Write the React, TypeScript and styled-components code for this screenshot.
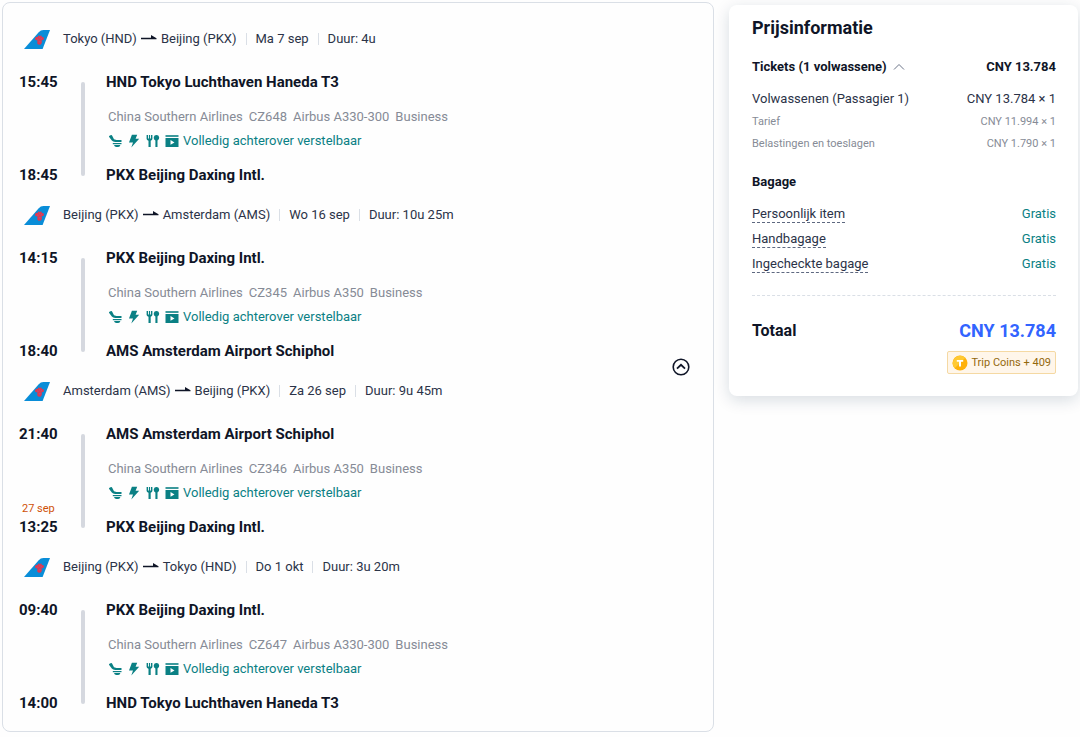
import React, { useState } from "react";
import styled, { createGlobalStyle } from "styled-components";

const ink = "#0f1527";
const body = "#2b3348";
const grey = "#868b96";
const teal = "#0a8084";

const GlobalStyle = createGlobalStyle`
  * { box-sizing: border-box; }
  body {
    margin: 0;
    background: #fefefe;
    color: ${body};
    font-family: Roboto, "Liberation Sans", sans-serif;
    font-size: 13px;
    line-height: 24px;
  }
  button {
    margin: 0;
    padding: 0;
    border: 0;
    background: none;
    color: inherit;
    font: inherit;
    cursor: pointer;
  }
  svg { display: block; flex: none; }
`;

const Page = styled.main`
  display: grid;
  grid-template-columns: minmax(0, 1fr) 349px;
  align-items: start;
  gap: 15px;
  padding: 2px;
`;

const Itinerary = styled.section`
  display: flex;
  align-items: center;
  padding: 0 23px 0 16px;
  border: 1px solid #dadfe6;
  border-radius: 8px;
`;

const Segments = styled.div`
  display: flex;
  flex: 1;
  flex-direction: column;
  gap: 12px;
  padding: 20px 0 16px;
`;

const Segment = styled.article`
  display: flex;
  flex-direction: column;
  gap: 15px;
`;

const SegmentHeader = styled.header`
  display: flex;
  align-items: center;
  height: 32px;
  padding-left: 5px;
  white-space: nowrap;
`;

const Route = styled.span`
  display: flex;
  align-items: center;
  gap: 4px;
  margin-left: 13px;
`;

const Fact = styled.span`
  display: flex;
  align-items: center;

  &::before {
    content: "";
    width: 1px;
    height: 12px;
    margin: 0 9px;
    background: #dadfe6;
  }
`;

const Leg = styled.div`
  display: grid;
  grid-template-columns: 41px 4px minmax(0, 1fr);
  column-gap: 21px;
`;

const Times = styled.div`
  display: flex;
  flex-direction: column;
  justify-content: space-between;
  white-space: nowrap;
`;

const Time = styled.time`
  display: block;
  color: ${ink};
  font-size: 15px;
  font-weight: 700;
`;

const DayShift = styled.div`
  padding-left: 3px;
  color: #cf5108;
  font-size: 11px;
  line-height: 12px;
`;

const Track = styled.div`
  margin: 12px 0 11px;
  border-radius: 2px;
  background: #d5d8df;
`;

const Stops = styled.div`
  display: flex;
  flex-direction: column;
`;

const Airport = styled.h3`
  margin: 0;
  color: ${ink};
  font-size: 15px;
  font-weight: 700;
  line-height: 24px;
`;

const Flight = styled.div`
  margin: 11px 0 10px;
  padding-left: 2px;
`;

const FlightFacts = styled.div`
  display: flex;
  gap: 6px;
  color: ${grey};
`;

const Amenities = styled.div`
  display: flex;
  align-items: center;
  gap: 4px;
  color: ${teal};
`;

const RoundToggle = styled.button`
  display: flex;
`;

const PriceCard = styled.aside`
  margin-top: 3px;
  padding: 11px 22px 22px 23px;
  border-radius: 8px;
  background: #fff;
  box-shadow: 0 4px 16px rgba(15, 41, 77, 0.16);
`;

const Title = styled.h2`
  margin: 0 0 15px;
  color: ${ink};
  font-size: 18px;
  font-weight: 700;
  line-height: 24px;
`;

const Row = styled.div<{ $strong?: boolean }>`
  display: flex;
  align-items: center;
  justify-content: space-between;
  color: ${(p) => (p.$strong ? ink : body)};
  font-weight: ${(p) => (p.$strong ? 700 : 400)};
`;

const TicketToggle = styled.button`
  display: flex;
  align-items: center;
  gap: 6px;
`;

const Fares = styled.div`
  padding-top: 8px;
`;

const SmallRow = styled(Row)`
  color: ${grey};
  font-size: 11px;
  line-height: 22px;
`;

const SubTitle = styled.h3`
  margin: 15px 0 7px;
  color: ${ink};
  font-size: 13px;
  font-weight: 700;
  line-height: 24px;
`;

const BaggageRow = styled(Row)`
  height: 25px;
`;

const Hint = styled.button`
  border-bottom: 1px dashed #5d6880;
  line-height: 17px;
`;

const Free = styled.span`
  color: ${teal};
`;

const Total = styled(Row)`
  margin-top: 19px;
  padding-top: 23px;
  border-top: 1px dashed #dadfe6;
`;

const TotalLabel = styled.span`
  font-size: 16px;
`;

const TotalPrice = styled.span`
  color: #3264ff;
  font-size: 18px;
`;

const Coins = styled.div`
  display: flex;
  align-items: center;
  gap: 3px;
  width: fit-content;
  height: 23px;
  margin: 8px 0 0 auto;
  padding: 0 4px;
  border: 1px solid #f5d9a3;
  border-radius: 2px;
  background: #fff6ea;
  color: #94690d;
  font-size: 11px;
`;

function TailLogo() {
  return (
    <svg width="26" height="19" viewBox="0 0 26 19" aria-hidden="true">
      <path d="M0 19 14.5 2.4Q16.6 0 19.5 0H26L18.6 19Z" fill="#098dd8" />
      <path
        d="M11 8.3 12.2 6.7 13.6 7 14.6 5.2 15.7 6.2 17.2 5.3 17.9 7 19.5 7.3 20 9.3 18.4 10.2 17.6 10.1 17.9 12.2 17 14.4 14.6 14.8 13.2 13.6 13.5 10.6 11.4 10Z"
        fill="#e2374f"
      />
      <path d="m13.2 9 1.3.4m2.3-.3 1.1-.6M15.7 7.2v1.2m-.9 3.5 1.8-.2" stroke="#8d6aa3" strokeWidth=".8" />
    </svg>
  );
}

function RouteArrow() {
  return (
    <svg width="16" height="12" viewBox="0 0 16 12" role="img" aria-label="naar">
      <path d="M0 4.8H10V2L15.5 5.2V6.3H0Z" fill={ink} />
    </svg>
  );
}

function SeatIcon() {
  return (
    <svg width="14" height="14" viewBox="0 0 14 14" fill="currentColor" aria-hidden="true">
      <path d="M1 2.7Q.8 2 1.5 1.7L3.1 1.1Q3.8 1 4.2 1.7L6 5.2 8.5 6H13.5V8H7.2Q4.9 7.9 3.8 6.6Z" />
      <path d="M4.8 9H13.5V10.2H4.8Z" />
      <path d="M6 11H12.4Q12 13 10.2 13H8.4Q6.6 12.8 6 11Z" />
    </svg>
  );
}

function BoltIcon() {
  return (
    <svg width="14" height="14" viewBox="0 0 14 14" fill="currentColor" aria-hidden="true">
      <path d="M4.9.7H10.2L8.6 4.8H12.2L4.3 13.5 6 8.5H2Z" />
    </svg>
  );
}

function MealIcon() {
  return (
    <svg width="14" height="14" viewBox="0 0 14 14" fill="currentColor" aria-hidden="true">
      <path d="M.6 1H2V4.4H2.9V1H4.1V4.4H5V1H6.4V5Q6.3 6.4 4.7 6.7V13H2.5V6.7Q.7 6.4.6 5Z" />
      <path d="M10.4.9A2.7 2.9 0 0 1 11.5 6.5V13H9.4V6.5A2.7 2.9 0 0 1 10.4.9Z" />
    </svg>
  );
}

function VideoIcon() {
  return (
    <svg width="14" height="14" viewBox="0 0 14 14" aria-hidden="true">
      <path d="M.5 1.2H13.5V2.8H.5Z" fill="currentColor" />
      <path
        fillRule="evenodd"
        d="M.5 4H13.5V12.9H.5ZM5.5 6.1V10.8L9.5 8.4Z"
        fill="currentColor"
      />
    </svg>
  );
}

const AmenityIcons = styled.span`
  display: flex;
  gap: 5px;
`;

type Stop = { time: string; airport: string };
type SegmentData = {
  from: string;
  to: string;
  date: string;
  duration: string;
  departure: Stop;
  arrival: Stop & { day?: string };
  flight: string;
  aircraft: string;
};

const haneda = "HND Tokyo Luchthaven Haneda T3";
const daxing = "PKX Beijing Daxing Intl.";
const schiphol = "AMS Amsterdam Airport Schiphol";

const segments: SegmentData[] = [
  {
    from: "Tokyo (HND)", to: "Beijing (PKX)", date: "Ma 7 sep", duration: "4u",
    departure: { time: "15:45", airport: haneda },
    arrival: { time: "18:45", airport: daxing },
    flight: "CZ648", aircraft: "Airbus A330-300",
  },
  {
    from: "Beijing (PKX)", to: "Amsterdam (AMS)", date: "Wo 16 sep", duration: "10u 25m",
    departure: { time: "14:15", airport: daxing },
    arrival: { time: "18:40", airport: schiphol },
    flight: "CZ345", aircraft: "Airbus A350",
  },
  {
    from: "Amsterdam (AMS)", to: "Beijing (PKX)", date: "Za 26 sep", duration: "9u 45m",
    departure: { time: "21:40", airport: schiphol },
    arrival: { time: "13:25", airport: daxing, day: "27 sep" },
    flight: "CZ346", aircraft: "Airbus A350",
  },
  {
    from: "Beijing (PKX)", to: "Tokyo (HND)", date: "Do 1 okt", duration: "3u 20m",
    departure: { time: "09:40", airport: daxing },
    arrival: { time: "14:00", airport: haneda },
    flight: "CZ647", aircraft: "Airbus A330-300",
  },
];

function SegmentView({ data, open }: { data: SegmentData; open: boolean }) {
  return (
    <Segment>
      <SegmentHeader>
        <TailLogo />
        <Route>
          <span>{data.from}</span>
          <RouteArrow />
          <span>{data.to}</span>
        </Route>
        <Fact>{data.date}</Fact>
        <Fact>Duur: {data.duration}</Fact>
      </SegmentHeader>
      {open && (
        <Leg>
          <Times>
            <Time>{data.departure.time}</Time>
            <div>
              {data.arrival.day && <DayShift>{data.arrival.day}</DayShift>}
              <Time>{data.arrival.time}</Time>
            </div>
          </Times>
          <Track />
          <Stops>
            <Airport>{data.departure.airport}</Airport>
            <Flight>
              <FlightFacts>
                <span>China Southern Airlines</span>
                <span>{data.flight}</span>
                <span>{data.aircraft}</span>
                <span>Business</span>
              </FlightFacts>
              <Amenities>
                <AmenityIcons>
                  <SeatIcon />
                  <BoltIcon />
                  <MealIcon />
                  <VideoIcon />
                </AmenityIcons>
                <span>Volledig achterover verstelbaar</span>
              </Amenities>
            </Flight>
            <Airport>{data.arrival.airport}</Airport>
          </Stops>
        </Leg>
      )}
    </Segment>
  );
}

export default function App() {
  const [detailsOpen, setDetailsOpen] = useState(true);
  const [faresOpen, setFaresOpen] = useState(true);

  return (
    <>
      <GlobalStyle />
      <Page>
        <Itinerary>
          <Segments>
            {segments.map((s) => (
              <SegmentView key={s.flight} data={s} open={detailsOpen} />
            ))}
          </Segments>
          <RoundToggle
            aria-label="Vluchtdetails"
            aria-expanded={detailsOpen}
            onClick={() => setDetailsOpen(!detailsOpen)}
          >
            <svg width="18" height="18" viewBox="0 0 18 18" fill="none" stroke={ink}>
              <circle cx="9" cy="9" r="7.8" strokeWidth="1.6" />
              <path d="m5 10.7 4-3.9 4 3.9" strokeWidth="1.8" />
            </svg>
          </RoundToggle>
        </Itinerary>

        <PriceCard>
          <Title>Prijsinformatie</Title>
          <Row $strong>
            <TicketToggle aria-expanded={faresOpen} onClick={() => setFaresOpen(!faresOpen)}>
              Tickets (1 volwassene)
              <svg width="12" height="8" viewBox="0 0 12 8" fill="none" stroke="#6b7488" aria-hidden="true">
                <path d="M1 6.5 6 1.5l5 5" />
              </svg>
            </TicketToggle>
            <span>CNY 13.784</span>
          </Row>
          {faresOpen && (
            <Fares>
              <Row>
                <span>Volwassenen (Passagier 1)</span>
                <span>CNY 13.784 × 1</span>
              </Row>
              <SmallRow>
                <span>Tarief</span>
                <span>CNY 11.994 × 1</span>
              </SmallRow>
              <SmallRow>
                <span>Belastingen en toeslagen</span>
                <span>CNY 1.790 × 1</span>
              </SmallRow>
            </Fares>
          )}
          <SubTitle>Bagage</SubTitle>
          {["Persoonlijk item", "Handbagage", "Ingecheckte bagage"].map((item) => (
            <BaggageRow key={item}>
              <Hint>{item}</Hint>
              <Free>Gratis</Free>
            </BaggageRow>
          ))}
          <Total $strong>
            <TotalLabel>Totaal</TotalLabel>
            <TotalPrice>CNY 13.784</TotalPrice>
          </Total>
          <Coins>
            <svg width="16" height="16" viewBox="0 0 16 16" aria-hidden="true">
              <circle cx="8" cy="8" r="7.5" fill="#ffb10a" />
              <path d="M2.7 13.3A7.5 7.5 0 0 1 13.3 2.7Z" fill="#ffc933" />
              <path d="M4.8 5H11.2V6.8H9V11.5H7V6.8H4.8Z" fill="#fff" />
            </svg>
            <span>Trip Coins + 409</span>
          </Coins>
        </PriceCard>
      </Page>
    </>
  );
}
